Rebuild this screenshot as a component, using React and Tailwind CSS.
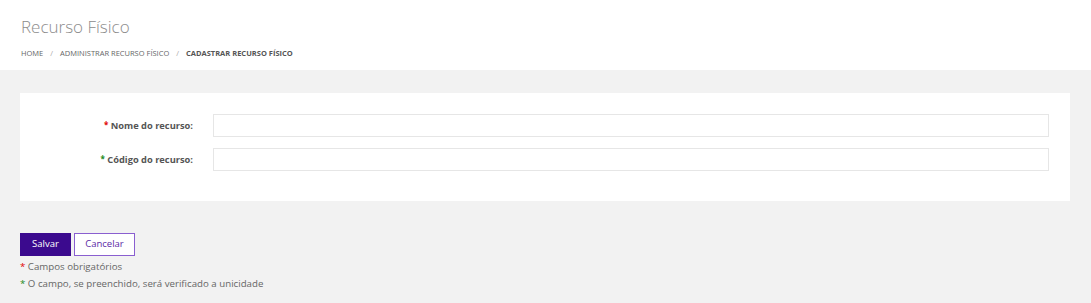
export default function App() {
  return (
    <div className="min-h-[303px] bg-[#f2f2f2] font-['Open_Sans',sans-serif]">
      <div className="h-[70px] bg-white px-[21px] pt-[14px]">
        <h1 className="text-[17px] font-light leading-[25px] text-[#8c8c8c]">Recurso Físico</h1>
        <div className="mt-[9px] flex items-center gap-[7px] text-[7.5px] uppercase text-[#666]">
          <span>Home</span>
          <span className="text-[#aaa]">/</span>
          <span>Administrar Recurso Físico</span>
          <span className="text-[#aaa]">/</span>
          <span className="font-bold text-[#555]">Cadastrar Recurso Físico</span>
        </div>
      </div>

      <div className="px-[20px] pt-[23px]">
        <div className="h-[108px] w-[1050px] bg-white pt-[21px] pr-[21px]">
          <div className="flex flex-col gap-[11px]">
            <div className="flex items-center">
              <label className="w-[173px] text-right text-[9.3px] font-bold text-[#555]">
                <span className="align-top text-[8px] text-[#e00000]">*</span> Nome do recurso:
              </label>
              <input className="ml-[20px] h-[23px] flex-1 border border-[#e6e6e6] bg-white" />
            </div>
            <div className="flex items-center">
              <label className="w-[173px] text-right text-[9.3px] font-bold text-[#555]">
                <span className="align-top text-[8px] text-[#1a8a1a]">*</span> Código do recurso:
              </label>
              <input className="ml-[20px] h-[23px] flex-1 border border-[#e6e6e6] bg-white" />
            </div>
          </div>
        </div>

        <div className="mt-[32px] flex gap-[3px]">
          <button className="h-[23px] w-[51px] bg-[#3b0a8e] text-[9.5px] text-white">Salvar</button>
          <button className="h-[23px] w-[61px] border border-[#8a5fd0] bg-white text-[9.5px] text-[#5b2aa6]">Cancelar</button>
        </div>
        <p className="mt-[2px] text-[9.7px] leading-[17px] text-[#666]">
          <span className="text-[#e00000]">*</span> Campos obrigatórios
        </p>
        <p className="text-[9.7px] leading-[17px] text-[#666]">
          <span className="text-[#1a8a1a]">*</span> O campo, se preenchido, será verificado a unicidade
        </p>
      </div>
    </div>
  );
}
